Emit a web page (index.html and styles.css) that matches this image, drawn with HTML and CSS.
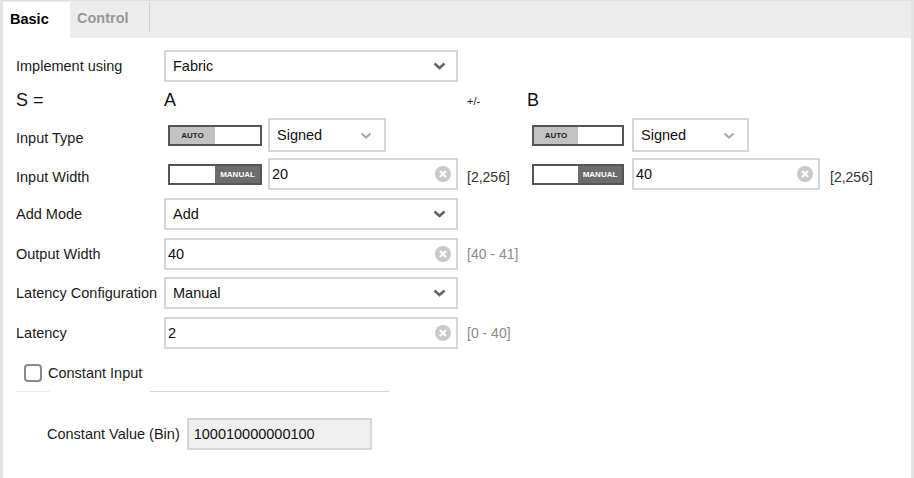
FILE: index.html
```html
<!DOCTYPE html>
<html>
<head>
<meta charset="utf-8">
<link rel="stylesheet" href="styles.css">
</head>
<body>
<div class="panel">
  <div class="tabs">
    <div class="tab active">Basic</div>
    <div class="tab">Control</div>
    <div class="tab-sep"></div>
  </div>
  <div class="content">
    <div class="row h32 mt12">
      <div class="lbl">Implement using</div>
      <div class="field select wide">
        <span class="val">Fabric</span>
        <svg class="chev" width="13" height="8" viewBox="0 0 13 8"><path d="M1.5 1.5 L6.5 6 L11.5 1.5" fill="none" stroke="#666" stroke-width="2.6"/></svg>
      </div>
    </div>

    <div class="row h20 mt8">
      <div class="lbl big">S =</div>
      <div class="grp-a big">A</div>
      <div class="rng pm">+/-</div>
      <div class="big b-head">B</div>
    </div>

    <div class="row h34 mt8">
      <div class="lbl low">Input Type</div>
      <div class="grp-a">
        <div class="toggle"><span class="t-on auto">AUTO</span><span class="t-off"></span></div>
        <div class="field select small">
          <span class="val">Signed</span>
          <svg class="chev light" width="12" height="7" viewBox="0 0 12 7"><path d="M1.5 1.5 L6 5.5 L10.5 1.5" fill="none" stroke="#aaa" stroke-width="2.2"/></svg>
        </div>
      </div>
      <div class="rng"></div>
      <div class="grp-b">
        <div class="toggle tb"><span class="t-on auto">AUTO</span><span class="t-off"></span></div>
        <div class="field select small sb">
          <span class="val">Signed</span>
          <svg class="chev light" width="12" height="7" viewBox="0 0 12 7"><path d="M1.5 1.5 L6 5.5 L10.5 1.5" fill="none" stroke="#aaa" stroke-width="2.2"/></svg>
        </div>
      </div>
    </div>

    <div class="row h32 mt6">
      <div class="lbl low">Input Width</div>
      <div class="grp-a">
        <div class="toggle"><span class="t-off"></span><span class="t-on manual">MANUAL</span></div>
        <div class="field input grow">
          <span class="val">20</span>
          <svg class="clr" width="16" height="16" viewBox="0 0 16 16"><circle cx="8" cy="8" r="8" fill="#c9c9c9"/><path d="M5 5 L11 11 M11 5 L5 11" stroke="#fff" stroke-width="2.2"/></svg>
        </div>
      </div>
      <div class="rng dark low">[2,256]</div>
      <div class="grp-b">
        <div class="toggle tb"><span class="t-off"></span><span class="t-on manual">MANUAL</span></div>
        <div class="field input ib">
          <span class="val">40</span>
          <svg class="clr" width="16" height="16" viewBox="0 0 16 16"><circle cx="8" cy="8" r="8" fill="#c9c9c9"/><path d="M5 5 L11 11 M11 5 L5 11" stroke="#fff" stroke-width="2.2"/></svg>
        </div>
        <div class="rng-b dark low">[2,256]</div>
      </div>
    </div>

    <div class="row h32 mt8">
      <div class="lbl">Add Mode</div>
      <div class="field select wide">
        <span class="val">Add</span>
        <svg class="chev" width="13" height="8" viewBox="0 0 13 8"><path d="M1.5 1.5 L6.5 6 L11.5 1.5" fill="none" stroke="#666" stroke-width="2.6"/></svg>
      </div>
    </div>

    <div class="row h32 mt8">
      <div class="lbl">Output Width</div>
      <div class="field input wide">
        <span class="val">40</span>
        <svg class="clr" width="16" height="16" viewBox="0 0 16 16"><circle cx="8" cy="8" r="8" fill="#c9c9c9"/><path d="M5 5 L11 11 M11 5 L5 11" stroke="#fff" stroke-width="2.2"/></svg>
      </div>
      <div class="rng">[40 - 41]</div>
    </div>

    <div class="row h32 mt7">
      <div class="lbl">Latency Configuration</div>
      <div class="field select wide">
        <span class="val">Manual</span>
        <svg class="chev" width="13" height="8" viewBox="0 0 13 8"><path d="M1.5 1.5 L6.5 6 L11.5 1.5" fill="none" stroke="#666" stroke-width="2.6"/></svg>
      </div>
    </div>

    <div class="row h32 mt8">
      <div class="lbl">Latency</div>
      <div class="field input wide">
        <span class="val">2</span>
        <svg class="clr" width="16" height="16" viewBox="0 0 16 16"><circle cx="8" cy="8" r="8" fill="#c9c9c9"/><path d="M5 5 L11 11 M11 5 L5 11" stroke="#fff" stroke-width="2.2"/></svg>
      </div>
      <div class="rng">[0 - 40]</div>
    </div>

    <div class="row check-row">
      <span class="checkbox"></span>
      <span class="check-lbl">Constant Input</span>
    </div>

    <div class="divider">
      <span class="seg1"></span>
      <span class="seg2"></span>
    </div>

    <div class="row const-row">
      <div class="const-lbl">Constant Value (Bin)</div>
      <div class="field input const">
        <span class="val">100010000000100</span>
      </div>
    </div>
  </div>
</div>
</body>
</html>
```
FILE: styles.css
```css
html, body {
  margin: 0;
  padding: 0;
  background: #fff;
}
body {
  font-family: "Liberation Sans", Arial, sans-serif;
  font-size: 14.5px;
  color: #1a1a1a;
}
.panel {
  width: 914px;
  height: 478px;
  box-sizing: border-box;
  border-left: 3px solid #e3e3e3;
  border-right: 3px solid #e3e3e3;
  border-top: 1px solid #e0e0e0;
  overflow: hidden;
}
.tabs {
  display: flex;
  align-items: stretch;
  height: 37px;
  background: #ececec;
}
.tab {
  font-weight: bold;
  font-size: 14.5px;
  color: #999;
  padding: 9px 0 0 7px;
  width: 67px;
  box-sizing: border-box;
}
.tab.active {
  background: #fff;
  color: #000;
  margin-top: 1px;
}
.tab-sep {
  width: 1px;
  background: #cfcfcf;
  margin: 1px 0 6px 12px;
}
.content {
  padding-left: 13px;
  display: flex;
  flex-direction: column;
}
.row {
  display: flex;
  align-items: center;
}
.h32 { height: 32px; }
.h34 { height: 34px; }
.h20 { height: 20px; }
.mt12 { margin-top: 12px; }
.mt8 { margin-top: 8px; }
.mt7 { margin-top: 7px; }
.mt6 { margin-top: 6px; }
.lbl {
  width: 148px;
  flex: none;
  white-space: nowrap;
}
.low {
  padding-top: 5px;
}
.big {
  font-size: 18px;
  color: #111;
}
.grp-a {
  width: 294px;
  flex: none;
  display: flex;
  align-items: center;
  height: 100%;
}
.grp-b {
  display: flex;
  align-items: center;
  height: 100%;
}
.rng {
  width: 65px;
  flex: none;
  padding-left: 9px;
  color: #8a8a8a;
  font-size: 14px;
}
.rng.dark, .rng-b.dark {
  color: #333;
}
.rng-b {
  margin-left: 10px;
  font-size: 14px;
}
.pm {
  font-size: 11px;
  color: #222;
  padding-top: 2px;
}
.b-head {
  margin-left: -5px;
}
.field {
  box-sizing: border-box;
  height: 100%;
  border: 2px solid #d6d6d6;
  background: #fff;
  display: flex;
  align-items: center;
  position: relative;
}
.select { padding-left: 7px; }
.input { padding-left: 2px; }
.field .val {
  flex: 1;
  color: #111;
}
.wide { width: 294px; flex: none; }
.small { width: 118px; flex: none; }
.grow { width: 190px; flex: none; }
.ib { width: 188px; flex: none; }
.sb { width: 117px; }
.chev {
  margin-right: 10px;
  flex: none;
}
.chev.light {
  margin-right: 12px;
}
.clr {
  margin-right: 5px;
  flex: none;
}
.toggle {
  box-sizing: border-box;
  width: 94px;
  height: 21px;
  margin-left: 4px;
  margin-right: 6px;
  border: 2px solid #555;
  display: flex;
  flex: none;
}
.toggle.tb {
  width: 92px;
  margin-left: 0;
  margin-right: 8px;
}
.toggle span {
  flex: 1;
  display: flex;
  align-items: center;
  justify-content: center;
  font-size: 8px;
  font-weight: bold;
}
.t-off { background: #fff; }
.t-on.auto {
  background: #c2c2c2;
  color: #222;
}
.t-on.manual {
  background: #6c6c6c;
  color: #fff;
}
.check-row {
  margin-top: 13px;
  height: 22px;
}
.checkbox {
  box-sizing: border-box;
  width: 18px;
  height: 18px;
  border: 2px solid #8a8a8a;
  border-radius: 4px;
  margin-left: 8px;
  margin-right: 6px;
  background: #fff;
}
.divider {
  display: flex;
  margin-top: 7px;
  height: 1px;
}
.seg1 {
  margin-left: 1px;
  width: 33px;
  background: #ececec;
}
.seg2 {
  margin-left: 100px;
  width: 239px;
  background: #d4d4d4;
}
.const-row {
  margin-top: 26px;
  height: 32px;
}
.const-lbl {
  margin-left: 31px;
  margin-right: 7px;
  white-space: nowrap;
}
.field.const {
  width: 185px;
  background: #efefef;
  padding-left: 5px;
}
```
